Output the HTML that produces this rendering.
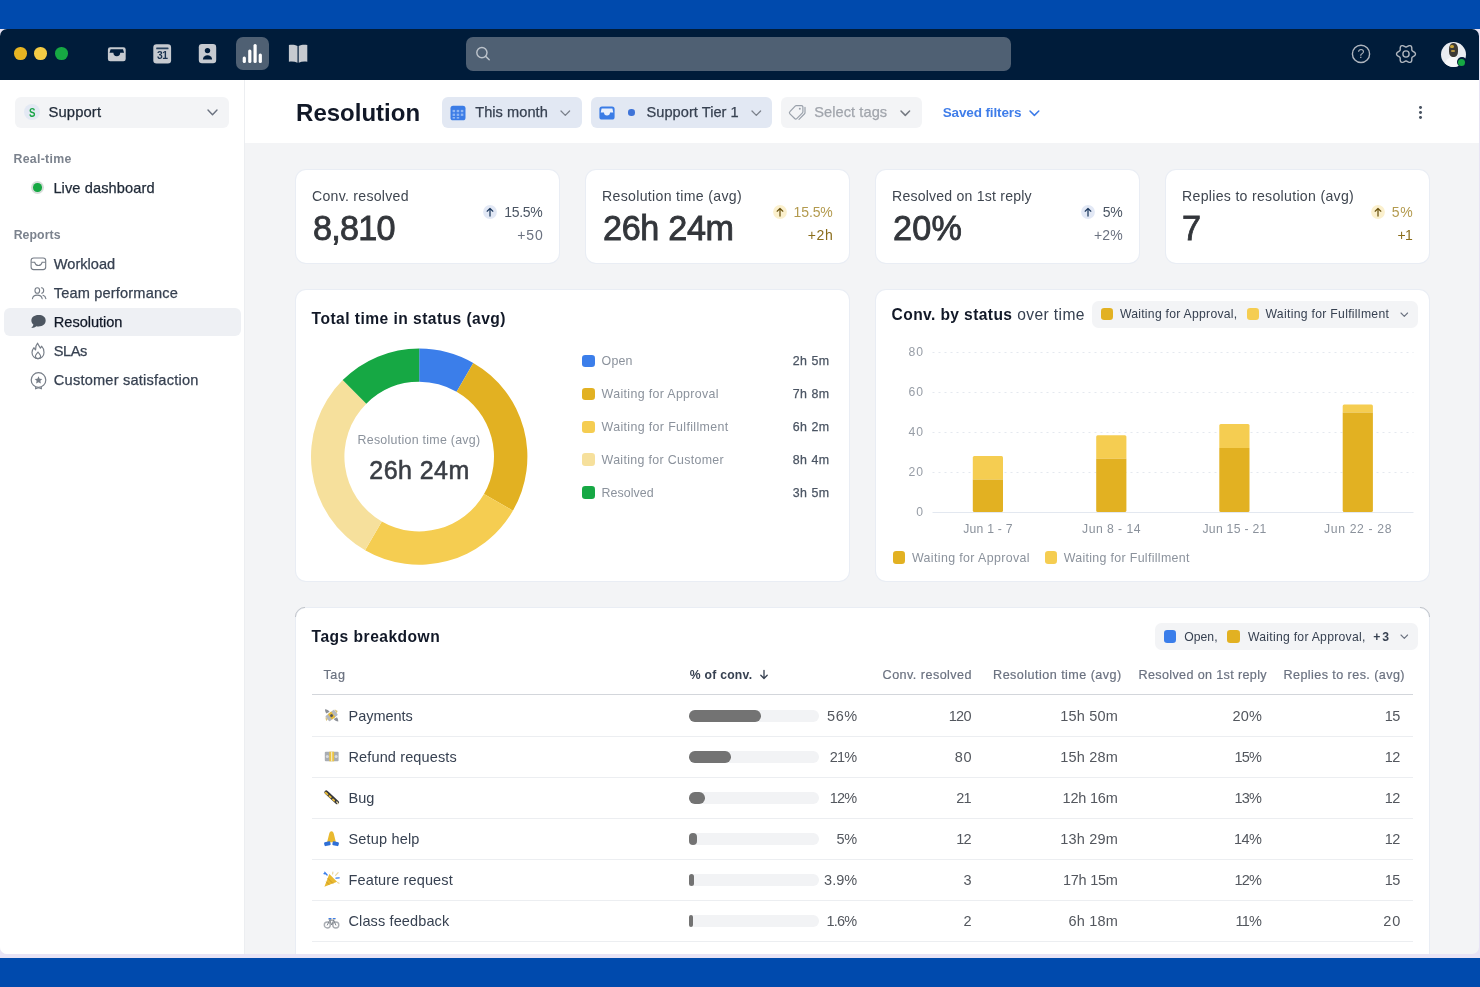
<!DOCTYPE html>
<html lang="en">
<head>
<meta charset="utf-8">
<title>Resolution report</title>
<style>
*{box-sizing:border-box;margin:0;padding:0}
html,body{width:1480px;height:987px;overflow:hidden;background:#004aad}
body{font-family:"Liberation Sans",Arial,sans-serif;color:#1f2937;position:relative;-webkit-font-smoothing:antialiased}
.abs{position:absolute}
.t{position:absolute;white-space:nowrap;line-height:18px;font-size:14px}
#back{position:absolute;left:0;top:29px;width:1480px;height:929px;background:#e8e3f5}
#win{will-change:transform;position:absolute;left:0;top:29px;width:1479px;height:925px;background:#f3f4f6;border-radius:7px;overflow:hidden}
#bar{position:absolute;left:0;top:0;width:100%;height:51px;background:#001c3a}
#side{position:absolute;left:0;top:51px;width:245px;height:880px;background:#fff;border-right:1px solid #eceef1}
#head{position:absolute;left:245px;top:51px;width:1240px;height:63px;background:#fff}
.card{position:absolute;background:#fff;border-radius:10px;box-shadow:0 0 0 1px #e9edf4}
.dot{position:absolute;border-radius:50%}
.sw{position:absolute;width:11px;height:11px;border-radius:3px}
svg{position:absolute;overflow:visible}
</style>
</head>
<body>
<div id="back"></div>
<div id="win">
  <!-- ===== title bar ===== -->
  <div id="bar">
    <div class="dot" style="left:14px;top:18.200px;width:12.600px;height:12.600px;background:#e6b422"></div>
    <div class="dot" style="left:34.200px;top:18.200px;width:12.600px;height:12.600px;background:#f3cb45"></div>
    <div class="dot" style="left:55px;top:18.200px;width:12.600px;height:12.600px;background:#16a843"></div>
    <div class="abs" style="left:236px;top:8px;width:33px;height:33px;border-radius:7px;background:#4f6073"></div>
    <div class="abs" style="left:466px;top:8px;width:545px;height:33.500px;border-radius:7px;background:#4f6073"></div>
    
    <!-- inbox -->
    <svg style="left:107px;top:16.600px" width="20" height="17" viewBox="0 0 20 17"><path d="M3.2 1.3h13.2a2.3 2.3 0 0 1 2.3 2.3v9.3a2.3 2.3 0 0 1-2.3 2.3H3.2a2.3 2.3 0 0 1-2.3-2.3V3.600a2.3 2.3 0 0 1 2.3-2.300z" fill="#c6cad0"/><path d="M3.6 3.3h12.400l1.1 3.500h-3.900a3.400 3.400 0 0 1-6.800 0H2.500z" fill="#001c3a"/></svg>
    <!-- calendar -->
    <svg style="left:153px;top:15px" width="19" height="20" viewBox="0 0 19 20"><rect x="0.300" y="0.200" width="17.800" height="19.200" rx="3.200" fill="#c6cad0"/><rect x="3.200" y="3.500" width="12.300" height="1.800" rx="0.500" fill="#27405c"/></svg>
    <span class="t" style="left:156.900px;top:20.400px;font-size:10.300px;line-height:14px;font-weight:700;letter-spacing:-0.350px;color:#1b3350">31</span>
    <!-- contact -->
    <svg style="left:198px;top:15px" width="19" height="20" viewBox="0 0 19 20"><rect x="0.800" y="0.100" width="17.400" height="19.200" rx="3.200" fill="#c6cad0"/><circle cx="9.500" cy="6.600" r="2.700" fill="#001c3a"/><path d="M4.900 15.400a4.600 4.200 0 0 1 9.200 0z" fill="#001c3a"/></svg>
    <!-- bars (active) -->
    <svg style="left:236px;top:8px" width="33" height="33" viewBox="0 0 33 33"><g fill="#fff"><rect x="6.700" y="19.600" width="3.200" height="6.400" rx="1.500"/><rect x="12.200" y="12.600" width="3.200" height="13.400" rx="1.500"/><rect x="17.500" y="7.100" width="3.200" height="18.900" rx="1.500"/><rect x="22.700" y="16.600" width="3.200" height="9.400" rx="1.500"/></g></svg>
    <!-- book -->
    <svg style="left:288px;top:15px" width="20" height="20" viewBox="0 0 20 20"><path d="M0.900 1.100c3-0.700 6.300-0.300 8.600 1v16.700c-2.600-1.300-5.700-1.600-8.600-1z" fill="#c6cad0"/><path d="M19.300 1.100c-3-0.700-6.300-0.300-8.600 1v16.700c2.600-1.300 5.700-1.600 8.600-1z" fill="#c6cad0"/></svg>
    <!-- search -->
    <svg style="left:474px;top:16px" width="18" height="18" viewBox="0 0 18 18"><circle cx="7.900" cy="7.600" r="5.100" fill="none" stroke="#bcc3cb" stroke-width="1.450"/><path d="M11.700 11.400l3.500 3.300" stroke="#bcc3cb" stroke-width="1.450" stroke-linecap="round"/></svg>
    <!-- help -->
    <svg style="left:1351px;top:15px" width="20" height="20" viewBox="0 0 20 20"><circle cx="10" cy="9.900" r="8.600" fill="none" stroke="#aeb5be" stroke-width="1.400"/><text x="10" y="14.400" text-anchor="middle" font-size="12.500" fill="#aeb5be">?</text></svg>
    <!-- gear -->
    <svg style="left:1395px;top:14px" width="22" height="22" viewBox="-11 -11 22 22"><path d="M9.45 0.00L9.33 0.61L9.01 1.19L8.51 1.69L7.92 2.12L7.31 2.48L6.76 2.80L6.32 3.12L6.02 3.47L5.86 3.91L5.80 4.45L5.81 5.09L5.80 5.80L5.72 6.52L5.53 7.21L5.20 7.78L4.73 8.18L4.14 8.39L3.48 8.39L2.79 8.22L2.12 7.92L1.51 7.57L0.95 7.25L0.46 7.03L0.00 6.95L-0.46 7.03L-0.95 7.25L-1.51 7.57L-2.12 7.92L-2.79 8.22L-3.48 8.39L-4.14 8.39L-4.72 8.18L-5.20 7.78L-5.53 7.21L-5.72 6.52L-5.80 5.80L-5.81 5.09L-5.80 4.45L-5.86 3.91L-6.02 3.47L-6.32 3.12L-6.76 2.80L-7.31 2.48L-7.92 2.12L-8.51 1.69L-9.01 1.19L-9.33 0.61L-9.45 0.00L-9.33 -0.61L-9.01 -1.19L-8.51 -1.69L-7.92 -2.12L-7.31 -2.48L-6.76 -2.80L-6.32 -3.12L-6.02 -3.47L-5.86 -3.91L-5.80 -4.45L-5.81 -5.09L-5.80 -5.80L-5.72 -6.52L-5.53 -7.21L-5.20 -7.78L-4.73 -8.18L-4.14 -8.39L-3.48 -8.39L-2.79 -8.22L-2.12 -7.92L-1.51 -7.57L-0.95 -7.25L-0.46 -7.03L-0.00 -6.95L0.46 -7.03L0.95 -7.25L1.51 -7.57L2.12 -7.92L2.79 -8.22L3.48 -8.39L4.14 -8.39L4.73 -8.18L5.20 -7.78L5.53 -7.21L5.72 -6.52L5.80 -5.80L5.81 -5.09L5.80 -4.45L5.86 -3.91L6.02 -3.48L6.32 -3.12L6.76 -2.80L7.31 -2.48L7.92 -2.12L8.51 -1.69L9.01 -1.19L9.33 -0.61Z" fill="none" stroke="#aeb5be" stroke-width="1.400" stroke-linejoin="round"/><circle cx="0" cy="0" r="3.100" fill="none" stroke="#aeb5be" stroke-width="1.400"/></svg>
    <!-- avatar -->
    <div class="dot" style="left:1441px;top:13px;width:25px;height:25px;background:#e9ecf1;overflow:hidden">
      <div class="abs" style="left:8px;top:1px;width:9px;height:14px;border-radius:45% 45% 40% 40%;background:#3c3a36"></div>
      <div class="abs" style="left:9px;top:3px;width:4px;height:3px;border-radius:2px;background:#c9a43a"></div>
      <div class="abs" style="left:10px;top:8px;width:4px;height:2px;border-radius:2px;background:#b59643"></div>
      <div class="abs" style="left:4px;top:15px;width:17px;height:12px;border-radius:8px 8px 0 0;background:#f7f8fa"></div>
    </div>
    <div class="dot" style="left:1456.600px;top:27.800px;width:10.600px;height:10.600px;background:#001c3a"></div>
    <div class="dot" style="left:1458.400px;top:29.600px;width:7px;height:7px;background:#16a843"></div>

  </div>
  <!-- ===== sidebar ===== -->
  <div id="side"></div>
  <!-- ===== header ===== -->
  <div id="head"></div>
  <div class="abs" style="left:15.00px;top:68.00px;width:214.00px;height:30.50px;background:#f3f4f6;border-radius:6.00px;"></div>
<div class="dot" style="left:23.6px;top:75.2px;width:16px;height:16px;background:#e3e9f4"></div>
<span class="t" style="left:27.56px;top:75.64px;font-size:12.40px;line-height:16px;color:#1aa548;font-weight:700;transform:scaleX(.78);">S</span>
<span class="t" style="left:48.50px;top:74.07px;font-size:14.80px;line-height:19px;color:#1f2937;letter-spacing:0.111px;-webkit-text-stroke:0.25px #1f2937;">Support</span>
<svg style="left:206.90px;top:80.20px" width="11.00" height="6.80" viewBox="0 0 11.00 6.80"><path d="M1 1L5.50 5.80L10.00 1" fill="none" stroke="#6b7280" stroke-width="1.40" stroke-linecap="round" stroke-linejoin="round"/></svg>
<span class="t" style="left:13.50px;top:121.74px;font-size:12.30px;line-height:16px;color:#7b828d;letter-spacing:0.304px;font-weight:700;">Real-time</span>
<div class="dot" style="left:30.900px;top:151.9px;width:13.600px;height:13.600px;background:#d6ddd9"></div>
<div class="dot" style="left:33.400px;top:154.4px;width:8.600px;height:8.600px;background:#16a843"></div>
<span class="t" style="left:53.40px;top:150.07px;font-size:14.60px;line-height:19px;color:#1f2937;letter-spacing:0.105px;-webkit-text-stroke:0.25px #1f2937;">Live dashboard</span>
<span class="t" style="left:13.70px;top:197.94px;font-size:12.30px;line-height:16px;color:#7b828d;letter-spacing:0.055px;font-weight:700;">Reports</span>
<div class="abs" style="left:4.00px;top:278.60px;width:236.70px;height:28.70px;background:#eef0f4;border-radius:6.00px;"></div>
<span class="t" style="left:53.80px;top:226.17px;font-size:14.60px;line-height:19px;color:#374151;-webkit-text-stroke:0.25px #374151;">Workload</span>
<span class="t" style="left:53.80px;top:254.87px;font-size:14.60px;line-height:19px;color:#374151;letter-spacing:0.153px;-webkit-text-stroke:0.25px #374151;">Team performance</span>
<span class="t" style="left:53.80px;top:284.17px;font-size:14.60px;line-height:19px;color:#111827;letter-spacing:-0.031px;-webkit-text-stroke:0.25px #111827;">Resolution</span>
<span class="t" style="left:53.80px;top:313.17px;font-size:14.60px;line-height:19px;color:#374151;letter-spacing:-0.499px;-webkit-text-stroke:0.25px #374151;">SLAs</span>
<span class="t" style="left:53.80px;top:342.17px;font-size:14.60px;line-height:19px;color:#374151;letter-spacing:0.212px;-webkit-text-stroke:0.25px #374151;">Customer satisfaction</span>
<svg style="left:29.5px;top:227.8px" width="17" height="14" viewBox="0 0 17 14"><rect x="1.1" y="1" width="14.6" height="11.6" rx="2.6" fill="none" stroke="#767d87" stroke-width="1.100"/><path d="M1.3 5.3h3.4c.6 2.2 1.900 3.200 3.700 3.200s3.100-1 3.700-3.200h3.400" fill="none" stroke="#767d87" stroke-width="1.100"/></svg>
<svg style="left:30.500px;top:257.2px" width="16.200" height="14.400" viewBox="0 0 18 16"><g fill="none" stroke="#767d87" stroke-width="1.250" stroke-linecap="round"><ellipse cx="7" cy="5" rx="2.6" ry="3.1"/><path d="M1.6 14.2c.4-2.700 2.500-4.100 5.400-4.100s5 1.400 5.400 4.100"/><path d="M11.600 2c1.500.1 2.500 1.300 2.500 3s-1 2.900-2.300 3.100"/><path d="M13.300 10.300c1.800.5 2.900 1.800 3.200 3.700"/></g></svg>
<svg style="left:29px;top:285.2px" width="18.200" height="16" viewBox="0 0 17 15"><path d="M8.900 1C4.900 1 2.200 3.200 2.200 6.100c0 1.500.7 2.800 1.900 3.700-.2 1.200-.9 2.300-2 3.200 1.900.1 3.500-.5 4.700-1.500.7.200 1.400.2 2.100.2 4 0 6.700-2.300 6.700-5.600S12.900 1 8.900 1z" fill="#4d5661"/></svg>
<svg style="left:30px;top:313.0px" width="16" height="18" viewBox="0 0 16 18"><g fill="none" stroke="#767d87" stroke-width="1.150" stroke-linejoin="round" stroke-linecap="round"><path d="M7.600 1.200C8 3.200 9.800 4.400 10.300 6.200C10.900 5.800 11.400 5 11.600 4.200C13.200 5.800 14 7.800 14 10.400C14 14 11.400 16.600 8 16.600C4.600 16.600 2 14 2 10.600C2 8.600 2.800 7 4 5.600C4.300 6.600 4.800 7.400 5.600 7.900C5.400 5.400 6 3 7.600 1.200Z"/><path d="M8 16.600C6.400 16.600 5.400 15.500 5.400 14.200C5.400 12.600 6.800 11.800 8 10C9.200 11.800 10.600 12.600 10.600 14.200C10.600 15.500 9.600 16.600 8 16.600Z"/></g></svg>
<svg style="left:28.500px;top:341.7px" width="19" height="20" viewBox="0 0 19 20"><g fill="none" stroke="#767d87" stroke-width="1.200"><circle cx="9.500" cy="9" r="7.300"/><path d="M6.800 15.900l-.2 1.900 2.900-1 2.900 1-.2-1.900" stroke-linejoin="round"/></g><path d="M9.500 5.200l1.150 2.500 2.700.3-2 1.850.55 2.700-2.400-1.350-2.400 1.350.55-2.700-2-1.850 2.700-.3z" fill="#767d87"/></svg>
  <span class="t" style="left:296.10px;top:68.58px;font-size:24.00px;line-height:30px;color:#111827;font-weight:700;">Resolution</span>
<div class="abs" style="left:441.50px;top:68.00px;width:140.00px;height:31.00px;background:#e2e8f3;border-radius:6.00px;"></div>
<svg style="left:449.5px;top:75.6px" width="16" height="16" viewBox="0 0 16 16"><rect x="0.5" y="0.700" width="15" height="14.600" rx="2.600" fill="#3b7ce6"/><g fill="#8fb6f3"><rect x="2.600" y="4.900" width="2.500" height="2.300"/><rect x="6.700" y="4.900" width="2.500" height="2.300"/><rect x="10.800" y="4.900" width="2.500" height="2.300"/><rect x="2.600" y="8.600" width="2.500" height="2.300"/><rect x="6.700" y="8.600" width="2.500" height="2.300"/><rect x="10.800" y="8.600" width="2.500" height="2.300"/><rect x="2.600" y="12" width="2.500" height="1.600"/><rect x="6.700" y="12" width="2.500" height="1.600"/></g></svg>
<span class="t" style="left:475.20px;top:73.97px;font-size:14.60px;line-height:19px;color:#374151;letter-spacing:0.043px;-webkit-text-stroke:0.25px #374151;">This month</span>
<svg style="left:560.10px;top:80.80px" width="10.60" height="6.40" viewBox="0 0 10.60 6.40"><path d="M1 1L5.30 5.40L9.60 1" fill="none" stroke="#7b818b" stroke-width="1.30" stroke-linecap="round" stroke-linejoin="round"/></svg>
<div class="abs" style="left:590.70px;top:68.00px;width:181.50px;height:31.00px;background:#e2e8f3;border-radius:6.00px;"></div>
<svg style="left:598.8px;top:76.6px" width="16" height="14" viewBox="0 0 16 14"><rect x="0.400" y="0.500" width="15.200" height="13" rx="2.600" fill="#3b7ce6"/><path d="M2.600 2.600h10.800l.9 3.900h-3.300a3 3 0 0 1-6 0H1.700z" fill="#eaf1fd"/></svg>
<div class="dot" style="left:628.3px;top:80.3px;width:6.400px;height:6.400px;background:#3f74d8"></div>
<span class="t" style="left:646.50px;top:73.97px;font-size:14.60px;line-height:19px;color:#374151;letter-spacing:0.039px;-webkit-text-stroke:0.25px #374151;">Support Tier 1</span>
<svg style="left:751.00px;top:80.80px" width="10.60" height="6.40" viewBox="0 0 10.60 6.40"><path d="M1 1L5.30 5.40L9.60 1" fill="none" stroke="#7b818b" stroke-width="1.30" stroke-linecap="round" stroke-linejoin="round"/></svg>
<div class="abs" style="left:780.50px;top:68.00px;width:141.10px;height:30.70px;background:#f3f4f6;border-radius:6.00px;"></div>
<svg style="left:788px;top:74.8px" width="19" height="17" viewBox="0 0 19 17"><g fill="none" stroke="#9aa1ab" stroke-width="1.200" stroke-linejoin="round" stroke-linecap="round"><path d="M8.200 1.600h5.200a1.500 1.500 0 0 1 1.500 1.500v4.700a1.500 1.500 0 0 1-.45 1.050l-5.700 5.700a1.500 1.500 0 0 1-2.100 0L1.900 9.800a1.500 1.500 0 0 1 0-2.100l5.250-5.650A1.500 1.500 0 0 1 8.200 1.600z"/><path d="M17 3.400v5.300a1.500 1.500 0 0 1-.45 1.050L11 15.300"/></g><circle cx="11.800" cy="4.700" r="1" fill="#9aa1ab"/></svg>
<span class="t" style="left:814.20px;top:73.97px;font-size:14.60px;line-height:19px;color:#a1a5ac;letter-spacing:0.077px;-webkit-text-stroke:0.25px #a1a5ac;">Select tags</span>
<svg style="left:900.00px;top:80.60px" width="10.60" height="6.40" viewBox="0 0 10.60 6.40"><path d="M1 1L5.30 5.40L9.60 1" fill="none" stroke="#757a82" stroke-width="1.50" stroke-linecap="round" stroke-linejoin="round"/></svg>
<span class="t" style="left:942.70px;top:74.56px;font-size:13.50px;line-height:18px;color:#3f7de9;letter-spacing:-0.132px;font-weight:700;">Saved filters</span>
<svg style="left:1029.30px;top:80.60px" width="10.80" height="6.40" viewBox="0 0 10.80 6.40"><path d="M1 1L5.40 5.40L9.80 1" fill="none" stroke="#3b7ae8" stroke-width="1.50" stroke-linecap="round" stroke-linejoin="round"/></svg>
<div class="dot" style="left:1419.1px;top:77.1px;width:2.800px;height:2.800px;background:#4b5563"></div>
<div class="dot" style="left:1419.1px;top:82.1px;width:2.800px;height:2.800px;background:#4b5563"></div>
<div class="dot" style="left:1419.1px;top:87.1px;width:2.800px;height:2.800px;background:#4b5563"></div>
  <!-- ===== content (coordinates relative to #win: y = page y - 29) ===== -->
  <div class="card" style="left:296px;top:141px;width:263px;height:93px"></div>
<span class="t" style="left:312.00px;top:158.36px;font-size:14.10px;line-height:18px;color:#3f4650;letter-spacing:0.270px;">Conv. resolved</span>
<span class="t" style="left:313.00px;top:179.49px;font-size:34.20px;line-height:40px;color:#33363b;letter-spacing:-0.750px;-webkit-text-stroke:0.85px #33363b;">8,810</span>
<svg style="left:481.80px;top:174.90px" width="16" height="16" viewBox="0 0 16 16"><circle cx="8" cy="8" r="6.900" fill="#e2e8f5"/><path d="M8 12V4.600M5.200 7.200L8 4.400l2.800 2.800" fill="none" stroke="#1e3a5f" stroke-width="1.250" stroke-linecap="round" stroke-linejoin="round"/></svg>
<span class="t" style="left:504.20px;top:174.06px;font-size:14.00px;line-height:18px;color:#4b5563;letter-spacing:-0.274px;">15.5%</span>
<span class="t" style="left:517.30px;top:196.66px;font-size:14.00px;line-height:18px;color:#6b7280;letter-spacing:0.876px;">+50</span>
<div class="card" style="left:586px;top:141px;width:263px;height:93px"></div>
<span class="t" style="left:602.00px;top:158.36px;font-size:14.10px;line-height:18px;color:#3f4650;letter-spacing:0.324px;">Resolution time (avg)</span>
<span class="t" style="left:603.00px;top:179.49px;font-size:34.20px;line-height:40px;color:#33363b;letter-spacing:-0.330px;-webkit-text-stroke:0.85px #33363b;">26h 24m</span>
<svg style="left:771.80px;top:174.90px" width="16" height="16" viewBox="0 0 16 16"><circle cx="8" cy="8" r="6.900" fill="#fbf0cd"/><path d="M8 12V4.600M5.200 7.200L8 4.400l2.800 2.800" fill="none" stroke="#6b5410" stroke-width="1.250" stroke-linecap="round" stroke-linejoin="round"/></svg>
<span class="t" style="left:793.60px;top:174.06px;font-size:14.00px;line-height:18px;color:#b39a4e;letter-spacing:-0.124px;">15.5%</span>
<span class="t" style="left:807.80px;top:196.66px;font-size:14.00px;line-height:18px;color:#8a6d1b;letter-spacing:0.626px;">+2h</span>
<div class="card" style="left:876px;top:141px;width:263px;height:93px"></div>
<span class="t" style="left:892.00px;top:158.36px;font-size:14.10px;line-height:18px;color:#3f4650;letter-spacing:0.206px;">Resolved on 1st reply</span>
<span class="t" style="left:893.00px;top:179.49px;font-size:34.20px;line-height:40px;color:#33363b;letter-spacing:0.276px;-webkit-text-stroke:0.85px #33363b;">20%</span>
<svg style="left:1080.40px;top:174.90px" width="16" height="16" viewBox="0 0 16 16"><circle cx="8" cy="8" r="6.900" fill="#e2e8f5"/><path d="M8 12V4.600M5.200 7.200L8 4.400l2.800 2.800" fill="none" stroke="#1e3a5f" stroke-width="1.250" stroke-linecap="round" stroke-linejoin="round"/></svg>
<span class="t" style="left:1102.80px;top:174.06px;font-size:14.00px;line-height:18px;color:#4b5563;letter-spacing:-0.234px;">5%</span>
<span class="t" style="left:1094.00px;top:196.66px;font-size:14.00px;line-height:18px;color:#6b7280;letter-spacing:0.194px;">+2%</span>
<div class="card" style="left:1166px;top:141px;width:263px;height:93px"></div>
<span class="t" style="left:1182.00px;top:158.36px;font-size:14.10px;line-height:18px;color:#3f4650;letter-spacing:0.308px;">Replies to resolution (avg)</span>
<span class="t" style="left:1182.00px;top:179.49px;font-size:34.20px;line-height:40px;color:#33363b;-webkit-text-stroke:0.85px #33363b;">7</span>
<svg style="left:1370.40px;top:174.90px" width="16" height="16" viewBox="0 0 16 16"><circle cx="8" cy="8" r="6.900" fill="#fbf0cd"/><path d="M8 12V4.600M5.200 7.200L8 4.400l2.800 2.800" fill="none" stroke="#6b5410" stroke-width="1.250" stroke-linecap="round" stroke-linejoin="round"/></svg>
<span class="t" style="left:1391.80px;top:174.06px;font-size:14.00px;line-height:18px;color:#b39a4e;letter-spacing:0.766px;">5%</span>
<span class="t" style="left:1397.59px;top:196.66px;font-size:14.00px;line-height:18px;color:#8a6d1b;letter-spacing:-0.750px;">+1</span>
  <div class="card" style="left:296px;top:261px;width:553px;height:291px"></div>
<span class="t" style="left:311.60px;top:278.98px;font-size:15.60px;line-height:22px;color:#111827;letter-spacing:0.457px;font-weight:700;">Total time in status (avg)</span>
<svg style="left:0;top:0" width="900" height="700" viewBox="0 0 900 700"><path d="M419.20 319.40A108.20 108.20 0 0 1 473.30 333.90L456.60 362.82A74.80 74.80 0 0 0 419.20 352.80Z" fill="#3b7eea"/><path d="M473.30 333.90A108.20 108.20 0 0 1 512.90 481.70L483.98 465.00A74.80 74.80 0 0 0 456.60 362.82Z" fill="#e2b122"/><path d="M512.90 481.70A108.20 108.20 0 0 1 365.10 521.30L381.80 492.38A74.80 74.80 0 0 0 483.98 465.00Z" fill="#f5cd51"/><path d="M365.10 521.30A108.20 108.20 0 0 1 342.69 351.09L366.31 374.71A74.80 74.80 0 0 0 381.80 492.38Z" fill="#f6e09c"/><path d="M342.69 351.09A108.20 108.20 0 0 1 419.20 319.40L419.20 352.80A74.80 74.80 0 0 0 366.31 374.71Z" fill="#16a844"/></svg>
<span class="t" style="left:357.50px;top:403.04px;font-size:12.40px;line-height:16px;color:#8b929c;letter-spacing:0.277px;">Resolution time (avg)</span>
<span class="t" style="left:369.30px;top:425.59px;font-size:25.00px;line-height:30px;color:#3a3e45;letter-spacing:0.436px;-webkit-text-stroke:0.55px #3a3e45;">26h 24m</span>
<div class="abs" style="left:582.40px;top:325.70px;width:12.40px;height:12.40px;background:#3b7eea;border-radius:3.20px;"></div>
<span class="t" style="left:601.60px;top:324.04px;font-size:12.40px;line-height:16px;color:#8b929c;letter-spacing:0.156px;">Open</span>
<span class="t" style="left:792.70px;top:324.04px;font-size:12.40px;line-height:16px;color:#4b5563;letter-spacing:0.510px;-webkit-text-stroke:0.25px #4b5563;">2h 5m</span>
<div class="abs" style="left:582.40px;top:358.60px;width:12.40px;height:12.40px;background:#e2b122;border-radius:3.20px;"></div>
<span class="t" style="left:601.60px;top:356.94px;font-size:12.40px;line-height:16px;color:#8b929c;letter-spacing:0.347px;">Waiting for Approval</span>
<span class="t" style="left:792.70px;top:356.94px;font-size:12.40px;line-height:16px;color:#4b5563;letter-spacing:0.510px;-webkit-text-stroke:0.25px #4b5563;">7h 8m</span>
<div class="abs" style="left:582.40px;top:391.50px;width:12.40px;height:12.40px;background:#f5cd51;border-radius:3.20px;"></div>
<span class="t" style="left:601.60px;top:389.84px;font-size:12.40px;line-height:16px;color:#8b929c;letter-spacing:0.362px;">Waiting for Fulfillment</span>
<span class="t" style="left:792.70px;top:389.84px;font-size:12.40px;line-height:16px;color:#4b5563;letter-spacing:0.510px;-webkit-text-stroke:0.25px #4b5563;">6h 2m</span>
<div class="abs" style="left:582.40px;top:424.40px;width:12.40px;height:12.40px;background:#f6e09c;border-radius:3.20px;"></div>
<span class="t" style="left:601.60px;top:422.74px;font-size:12.40px;line-height:16px;color:#8b929c;letter-spacing:0.327px;">Waiting for Customer</span>
<span class="t" style="left:792.70px;top:422.74px;font-size:12.40px;line-height:16px;color:#4b5563;letter-spacing:0.510px;-webkit-text-stroke:0.25px #4b5563;">8h 4m</span>
<div class="abs" style="left:582.40px;top:457.30px;width:12.40px;height:12.40px;background:#16a844;border-radius:3.20px;"></div>
<span class="t" style="left:601.60px;top:455.64px;font-size:12.40px;line-height:16px;color:#8b929c;letter-spacing:0.058px;">Resolved</span>
<span class="t" style="left:792.70px;top:455.64px;font-size:12.40px;line-height:16px;color:#4b5563;letter-spacing:0.510px;-webkit-text-stroke:0.25px #4b5563;">3h 5m</span>
  <div class="card" style="left:876px;top:261px;width:553px;height:291px"></div>
<span class="t" style="left:891.60px;top:274.78px;font-size:15.60px;line-height:22px;color:#111827;letter-spacing:0.387px;font-weight:700;">Conv. by status</span>
<span class="t" style="left:1017.20px;top:274.78px;font-size:15.60px;line-height:22px;color:#374151;letter-spacing:0.394px;">over time</span>
<div class="abs" style="left:1091.80px;top:271.80px;width:325.80px;height:27.30px;background:#f3f4f6;border-radius:6.50px;"></div>
<div class="abs" style="left:1100.80px;top:278.90px;width:12.40px;height:12.50px;background:#e2b122;border-radius:3.20px;"></div>
<span class="t" style="left:1119.90px;top:277.44px;font-size:12.20px;line-height:16px;color:#374151;letter-spacing:0.265px;">Waiting for Approval,</span>
<div class="abs" style="left:1246.80px;top:278.90px;width:12.40px;height:12.50px;background:#f5cd51;border-radius:3.20px;"></div>
<span class="t" style="left:1265.50px;top:277.44px;font-size:12.20px;line-height:16px;color:#374151;letter-spacing:0.303px;">Waiting for Fulfillment</span>
<svg style="left:1399.60px;top:283.10px" width="8.60" height="5.40" viewBox="0 0 8.60 5.40"><path d="M1 1L4.30 4.40L7.60 1" fill="none" stroke="#6b7280" stroke-width="1.10" stroke-linecap="round" stroke-linejoin="round"/></svg>
<span class="t" style="left:908.40px;top:315.34px;font-size:12.20px;line-height:16px;color:#979da6;letter-spacing:1.031px;">80</span>
<span class="t" style="left:908.40px;top:355.34px;font-size:12.20px;line-height:16px;color:#979da6;letter-spacing:1.031px;">60</span>
<span class="t" style="left:908.40px;top:395.34px;font-size:12.20px;line-height:16px;color:#979da6;letter-spacing:1.031px;">40</span>
<span class="t" style="left:908.40px;top:435.34px;font-size:12.20px;line-height:16px;color:#979da6;letter-spacing:1.031px;">20</span>
<span class="t" style="left:916.22px;top:475.34px;font-size:12.20px;line-height:16px;color:#979da6;">0</span>
<svg style="left:0;top:0" width="1479" height="700" viewBox="0 0 1479 700"><path d="M932.500 323.5H1413.500" stroke="#e4e8ef" stroke-width="1" stroke-dasharray="2 4"/><path d="M932.500 363.5H1413.500" stroke="#e4e8ef" stroke-width="1" stroke-dasharray="2 4"/><path d="M932.500 403.5H1413.500" stroke="#e4e8ef" stroke-width="1" stroke-dasharray="2 4"/><path d="M932.500 443.5H1413.500" stroke="#e4e8ef" stroke-width="1" stroke-dasharray="2 4"/><path d="M932.500 483.5H1413.500" stroke="#e3e8f0" stroke-width="1"/><path d="M972.8 450.6V428.5a1.500 1.500 0 0 1 1.500 -1.500h27.200a1.500 1.500 0 0 1 1.500 1.500V450.6z" fill="#f5cd51"/><path d="M972.8 450.6h30.200V481.5a1.500 1.500 0 0 1 -1.500 1.500h-27.200a1.500 1.500 0 0 1 -1.500 -1.500z" fill="#e2b122"/><path d="M1096.2 429.8V407.7a1.500 1.500 0 0 1 1.500 -1.500h27.200a1.500 1.500 0 0 1 1.500 1.500V429.8z" fill="#f5cd51"/><path d="M1096.2 429.8h30.200V481.5a1.500 1.500 0 0 1 -1.500 1.500h-27.200a1.500 1.500 0 0 1 -1.500 -1.500z" fill="#e2b122"/><path d="M1219.3 419.0V396.5a1.500 1.500 0 0 1 1.500 -1.500h27.200a1.500 1.500 0 0 1 1.500 1.500V419.0z" fill="#f5cd51"/><path d="M1219.3 419.0h30.200V481.5a1.500 1.500 0 0 1 -1.500 1.500h-27.200a1.500 1.500 0 0 1 -1.500 -1.500z" fill="#e2b122"/><path d="M1342.7 383.4V377.1a1.500 1.500 0 0 1 1.500 -1.500h27.200a1.500 1.500 0 0 1 1.500 1.500V383.4z" fill="#f5cd51"/><path d="M1342.7 383.4h30.200V481.5a1.500 1.500 0 0 1 -1.500 1.500h-27.200a1.500 1.500 0 0 1 -1.500 -1.500z" fill="#e2b122"/></svg>
<span class="t" style="left:963.25px;top:491.64px;font-size:12.20px;line-height:16px;color:#8b929c;letter-spacing:0.229px;">Jun 1 - 7</span>
<span class="t" style="left:1082.10px;top:491.64px;font-size:12.20px;line-height:16px;color:#8b929c;letter-spacing:0.461px;">Jun 8 - 14</span>
<span class="t" style="left:1202.45px;top:491.64px;font-size:12.20px;line-height:16px;color:#8b929c;letter-spacing:0.286px;">Jun 15 - 21</span>
<span class="t" style="left:1324.10px;top:491.64px;font-size:12.20px;line-height:16px;color:#8b929c;letter-spacing:0.636px;">Jun 22 - 28</span>
<div class="abs" style="left:892.80px;top:522.30px;width:12.40px;height:12.40px;background:#e2b122;border-radius:3.20px;"></div>
<span class="t" style="left:912.00px;top:520.74px;font-size:12.40px;line-height:16px;color:#8b929c;letter-spacing:0.374px;">Waiting for Approval</span>
<div class="abs" style="left:1044.50px;top:522.30px;width:12.40px;height:12.40px;background:#f5cd51;border-radius:3.20px;"></div>
<span class="t" style="left:1063.70px;top:520.74px;font-size:12.40px;line-height:16px;color:#8b929c;letter-spacing:0.321px;">Waiting for Fulfillment</span>
  <div class="card" style="left:296px;top:579px;width:1133px;height:400px"></div>
<span class="t" style="left:311.60px;top:596.68px;font-size:15.60px;line-height:22px;color:#111827;letter-spacing:0.483px;font-weight:700;">Tags breakdown</span>
<div class="abs" style="left:1154.50px;top:594.10px;width:263.10px;height:27.00px;background:#f3f4f6;border-radius:6.50px;"></div>
<div class="abs" style="left:1163.60px;top:601.20px;width:12.50px;height:12.50px;background:#3b7eea;border-radius:3.20px;"></div>
<span class="t" style="left:1184.20px;top:599.64px;font-size:12.20px;line-height:16px;color:#374151;letter-spacing:0.042px;">Open,</span>
<div class="abs" style="left:1227.10px;top:601.20px;width:12.50px;height:12.50px;background:#e2b122;border-radius:3.20px;"></div>
<span class="t" style="left:1247.90px;top:599.64px;font-size:12.20px;line-height:16px;color:#374151;letter-spacing:0.275px;">Waiting for Approval,</span>
<span class="t" style="left:1373.30px;top:599.64px;font-size:12.20px;line-height:16px;color:#374151;letter-spacing:1.790px;font-weight:700;">+3</span>
<svg style="left:1399.60px;top:605.30px" width="8.60" height="5.40" viewBox="0 0 8.60 5.40"><path d="M1 1L4.30 4.40L7.60 1" fill="none" stroke="#6b7280" stroke-width="1.10" stroke-linecap="round" stroke-linejoin="round"/></svg>
<span class="t" style="left:323.40px;top:637.74px;font-size:12.60px;line-height:16px;color:#6b7280;letter-spacing:0.643px;-webkit-text-stroke:0.20px #6b7280;">Tag</span>
<span class="t" style="left:689.80px;top:637.74px;font-size:12.20px;line-height:16px;color:#374151;letter-spacing:0.245px;font-weight:700;">% of conv.</span>
<svg style="left:758.5px;top:640.4px" width="10" height="11" viewBox="0 0 10 11"><path d="M5 1.300v8M1.800 6.300L5 9.500l3.200-3.200" fill="none" stroke="#374151" stroke-width="1.300" stroke-linecap="round" stroke-linejoin="round"/></svg>
<span class="t" style="left:882.60px;top:637.74px;font-size:12.60px;line-height:16px;color:#6b7280;letter-spacing:0.454px;-webkit-text-stroke:0.20px #6b7280;">Conv. resolved</span>
<span class="t" style="left:993.10px;top:637.74px;font-size:12.60px;line-height:16px;color:#6b7280;letter-spacing:0.458px;-webkit-text-stroke:0.20px #6b7280;">Resolution time (avg)</span>
<span class="t" style="left:1138.50px;top:637.74px;font-size:12.60px;line-height:16px;color:#6b7280;letter-spacing:0.352px;-webkit-text-stroke:0.20px #6b7280;">Resolved on 1st reply</span>
<span class="t" style="left:1283.50px;top:637.74px;font-size:12.60px;line-height:16px;color:#6b7280;letter-spacing:0.418px;-webkit-text-stroke:0.20px #6b7280;">Replies to res. (avg)</span>
<div class="abs" style="left:311.60px;top:665.00px;width:1101.40px;height:1.20px;background:#d3d6db;"></div>
<span class="t" style="left:348.50px;top:677.67px;font-size:14.50px;line-height:19px;color:#374151;letter-spacing:-0.024px;">Payments</span>
<div class="abs" style="left:689.40px;top:681.20px;width:129.40px;height:11.60px;background:#f2f3f5;border-radius:5.80px;"></div>
<div class="abs" style="left:689.40px;top:681.20px;width:71.80px;height:11.60px;background:#737373;border-radius:5.80px;"></div>
<span class="t" style="left:827.00px;top:677.67px;font-size:14.50px;line-height:19px;color:#53575e;letter-spacing:0.590px;">56%</span>
<span class="t" style="left:948.70px;top:677.67px;font-size:14.50px;line-height:19px;color:#53575e;letter-spacing:-0.645px;">120</span>
<span class="t" style="left:1060.20px;top:677.67px;font-size:14.50px;line-height:19px;color:#53575e;letter-spacing:0.196px;">15h 50m</span>
<span class="t" style="left:1232.50px;top:677.67px;font-size:14.50px;line-height:19px;color:#53575e;letter-spacing:0.240px;">20%</span>
<span class="t" style="left:1384.82px;top:677.67px;font-size:14.50px;line-height:19px;color:#53575e;letter-spacing:-0.750px;">15</span>
<div class="abs" style="left:311.60px;top:707.00px;width:1101.40px;height:1.00px;background:#eceef1;"></div>
<span class="t" style="left:348.50px;top:718.67px;font-size:14.50px;line-height:19px;color:#374151;letter-spacing:0.129px;">Refund requests</span>
<div class="abs" style="left:689.40px;top:722.20px;width:129.40px;height:11.60px;background:#f2f3f5;border-radius:5.80px;"></div>
<div class="abs" style="left:689.40px;top:722.20px;width:41.60px;height:11.60px;background:#737373;border-radius:5.80px;"></div>
<span class="t" style="left:829.68px;top:718.67px;font-size:14.50px;line-height:19px;color:#53575e;letter-spacing:-0.750px;">21%</span>
<span class="t" style="left:954.70px;top:718.67px;font-size:14.50px;line-height:19px;color:#53575e;letter-spacing:0.773px;">80</span>
<span class="t" style="left:1060.20px;top:718.67px;font-size:14.50px;line-height:19px;color:#53575e;letter-spacing:0.196px;">15h 28m</span>
<span class="t" style="left:1234.48px;top:718.67px;font-size:14.50px;line-height:19px;color:#53575e;letter-spacing:-0.750px;">15%</span>
<span class="t" style="left:1384.82px;top:718.67px;font-size:14.50px;line-height:19px;color:#53575e;letter-spacing:-0.750px;">12</span>
<div class="abs" style="left:311.60px;top:748.00px;width:1101.40px;height:1.00px;background:#eceef1;"></div>
<span class="t" style="left:348.50px;top:759.67px;font-size:14.50px;line-height:19px;color:#374151;letter-spacing:0.051px;">Bug</span>
<div class="abs" style="left:689.40px;top:763.20px;width:129.40px;height:11.60px;background:#f2f3f5;border-radius:5.80px;"></div>
<div class="abs" style="left:689.40px;top:763.20px;width:16.10px;height:11.60px;background:#737373;border-radius:5.80px;"></div>
<span class="t" style="left:829.68px;top:759.67px;font-size:14.50px;line-height:19px;color:#53575e;letter-spacing:-0.750px;">12%</span>
<span class="t" style="left:956.22px;top:759.67px;font-size:14.50px;line-height:19px;color:#53575e;letter-spacing:-0.750px;">21</span>
<span class="t" style="left:1062.60px;top:759.67px;font-size:14.50px;line-height:19px;color:#53575e;letter-spacing:-0.204px;">12h 16m</span>
<span class="t" style="left:1234.48px;top:759.67px;font-size:14.50px;line-height:19px;color:#53575e;letter-spacing:-0.750px;">13%</span>
<span class="t" style="left:1384.82px;top:759.67px;font-size:14.50px;line-height:19px;color:#53575e;letter-spacing:-0.750px;">12</span>
<div class="abs" style="left:311.60px;top:789.00px;width:1101.40px;height:1.00px;background:#eceef1;"></div>
<span class="t" style="left:348.50px;top:800.67px;font-size:14.50px;line-height:19px;color:#374151;letter-spacing:0.174px;">Setup help</span>
<div class="abs" style="left:689.40px;top:804.20px;width:129.40px;height:11.60px;background:#f2f3f5;border-radius:5.80px;"></div>
<div class="abs" style="left:689.40px;top:804.20px;width:7.90px;height:11.60px;background:#737373;border-radius:5.15px;"></div>
<span class="t" style="left:836.50px;top:800.67px;font-size:14.50px;line-height:19px;color:#53575e;letter-spacing:-0.257px;">5%</span>
<span class="t" style="left:956.22px;top:800.67px;font-size:14.50px;line-height:19px;color:#53575e;letter-spacing:-0.750px;">12</span>
<span class="t" style="left:1060.20px;top:800.67px;font-size:14.50px;line-height:19px;color:#53575e;letter-spacing:0.196px;">13h 29m</span>
<span class="t" style="left:1234.10px;top:800.67px;font-size:14.50px;line-height:19px;color:#53575e;letter-spacing:-0.560px;">14%</span>
<span class="t" style="left:1384.82px;top:800.67px;font-size:14.50px;line-height:19px;color:#53575e;letter-spacing:-0.750px;">12</span>
<div class="abs" style="left:311.60px;top:830.00px;width:1101.40px;height:1.00px;background:#eceef1;"></div>
<span class="t" style="left:348.50px;top:841.67px;font-size:14.50px;line-height:19px;color:#374151;letter-spacing:0.132px;">Feature request</span>
<div class="abs" style="left:689.40px;top:845.20px;width:129.40px;height:11.60px;background:#f2f3f5;border-radius:5.80px;"></div>
<div class="abs" style="left:689.40px;top:845.20px;width:5.10px;height:11.60px;background:#737373;border-radius:3.75px;"></div>
<span class="t" style="left:824.10px;top:841.67px;font-size:14.50px;line-height:19px;color:#53575e;letter-spacing:0.017px;">3.9%</span>
<span class="t" style="left:963.54px;top:841.67px;font-size:14.50px;line-height:19px;color:#53575e;">3</span>
<span class="t" style="left:1063.00px;top:841.67px;font-size:14.50px;line-height:19px;color:#53575e;letter-spacing:-0.271px;">17h 15m</span>
<span class="t" style="left:1234.40px;top:841.67px;font-size:14.50px;line-height:19px;color:#53575e;letter-spacing:-0.710px;">12%</span>
<span class="t" style="left:1384.82px;top:841.67px;font-size:14.50px;line-height:19px;color:#53575e;letter-spacing:-0.750px;">15</span>
<div class="abs" style="left:311.60px;top:871.00px;width:1101.40px;height:1.00px;background:#eceef1;"></div>
<span class="t" style="left:348.50px;top:882.67px;font-size:14.50px;line-height:19px;color:#374151;letter-spacing:0.121px;">Class feedback</span>
<div class="abs" style="left:689.40px;top:886.20px;width:129.40px;height:11.60px;background:#f2f3f5;border-radius:5.80px;"></div>
<div class="abs" style="left:689.40px;top:886.20px;width:3.20px;height:11.60px;background:#737373;border-radius:2.80px;"></div>
<span class="t" style="left:826.40px;top:882.67px;font-size:14.50px;line-height:19px;color:#53575e;letter-spacing:-0.750px;">1.6%</span>
<span class="t" style="left:963.54px;top:882.67px;font-size:14.50px;line-height:19px;color:#53575e;">2</span>
<span class="t" style="left:1068.50px;top:882.67px;font-size:14.50px;line-height:19px;color:#53575e;letter-spacing:0.188px;">6h 18m</span>
<span class="t" style="left:1235.56px;top:882.67px;font-size:14.50px;line-height:19px;color:#53575e;letter-spacing:-0.750px;">11%</span>
<span class="t" style="left:1383.30px;top:882.67px;font-size:14.50px;line-height:19px;color:#53575e;letter-spacing:0.773px;">20</span>
<div class="abs" style="left:311.60px;top:912.00px;width:1101.40px;height:1.00px;background:#eceef1;"></div>
<svg style="left:323px;top:677.8px" width="17" height="17" viewBox="0 0 17 17"><g transform="rotate(-38 8.500 8.500)"><rect x="3" y="5.200" width="11" height="6.800" rx="1" fill="#b4b8be"/><rect x="6.400" y="5.200" width="4.200" height="6.800" fill="#e6ba37"/><circle cx="8.500" cy="8.600" r="1.500" fill="#55585e"/></g><path d="M2 2.300c2 .2 3.600 1 4.600 2.400L3.300 6.500C2.500 5.300 2 3.900 2 2.300zM15.300 14.400c-2-.2-3.600-1-4.600-2.400l3.300-1.800c.8 1.200 1.300 2.600 1.300 4.200z" fill="#8c9097"/><path d="M11.500 2.300l3.200 1.700-1.300 2.300zM2.300 10.300l2.600 1.600-1.700 2z" fill="#d9c27a"/></svg>
<svg style="left:323px;top:718.8px" width="17" height="17" viewBox="0 0 17 17"><rect x="1.800" y="3.700" width="13.800" height="9.600" rx="1" fill="#a9adb3"/><rect x="6.300" y="3.700" width="4.800" height="9.600" fill="#ecc443"/><rect x="8.200" y="3.700" width="1" height="9.600" fill="#f6f0dc"/><circle cx="4.300" cy="8.500" r="1.500" fill="#d9dbdf"/><circle cx="13.100" cy="8.500" r="1.500" fill="#d9dbdf"/></svg>
<svg style="left:323px;top:760.0px" width="17" height="17" viewBox="0 0 17 17"><path d="M3.300 3.300l10.800 10" stroke="#35363a" stroke-width="3.800" stroke-linecap="round"/><path d="M2.700 3.700l1.800 1.700M6.400 7.100l1.300 1.200M10 10.500l1.200 1.100" stroke="#e6ba37" stroke-width="1.900" stroke-linecap="round"/><path d="M13.800 13l1.300 1.600" stroke="#e8d9a6" stroke-width="1.300" stroke-linecap="round"/></svg>
<svg style="left:323px;top:801.1px" width="17" height="17" viewBox="0 0 17 17"><path d="M8.500 1.200c1.300 0 1.900 1 2.300 2.600l2.100 8.400H4.100l2.100-8.400c.4-1.600 1-2.600 2.300-2.600z" fill="#e9b92f"/><rect x="1.200" y="11.700" width="6.300" height="4" rx="1" fill="#2f6fd6" transform="rotate(-12 4.300 13.700)"/><rect x="9.500" y="11.700" width="6.300" height="4" rx="1" fill="#2f6fd6" transform="rotate(12 12.700 13.700)"/></svg>
<svg style="left:323px;top:842.4px" width="17" height="17" viewBox="0 0 17 17"><path d="M1.400 15.700L6.300 3l7.800 7.800z" fill="#e9b92f"/><path d="M3.300 10.800l2.900 2.900M4.700 7.200l5.300 5.300" stroke="#c99a2c" stroke-width="1"/><path d="M1.800 1.300l2.300 2.700M13 7.200l3.200-.4M1 2.600l1.200.3" stroke="#3b7eea" stroke-width="1.300" stroke-linecap="round"/><path d="M12.600 4.400l2.500-2.800M9.600 3l.3-1.900M14.600 11.400l1.400.9" stroke="#ecd9a0" stroke-width="1.200" stroke-linecap="round"/></svg>
<svg style="left:323px;top:884.8px" width="17" height="17" viewBox="0 0 17 17"><g fill="none" stroke="#a9adb3" stroke-width="1.400"><circle cx="4.300" cy="11" r="3"/><circle cx="12.800" cy="11" r="3"/></g><path d="M4.300 11l2.500-4.800h3.900l2.100 4.800M6.800 6.200l1.900 4.800l2-4.800M5.900 5.100h2.200M10.200 4.900h1.900" fill="none" stroke="#7e848c" stroke-width="1" stroke-linecap="round"/><path d="M6.100 4.600h1.800M10.400 4.500h1.600" stroke="#3b7eea" stroke-width="1.200" stroke-linecap="round"/></svg>
<svg style="left:0;top:0" width="1479" height="700" viewBox="0 0 1479 700"><path d="M295.400 588.0a9.600 9.600 0 0 1 9.600 -9.600" fill="none" stroke="#a4a7ac" stroke-width="0.600"/><path d="M1420 578.4a9.600 9.600 0 0 1 9.600 9.600" fill="none" stroke="#a4a7ac" stroke-width="0.600"/></svg>
</div>
</body>
</html>
